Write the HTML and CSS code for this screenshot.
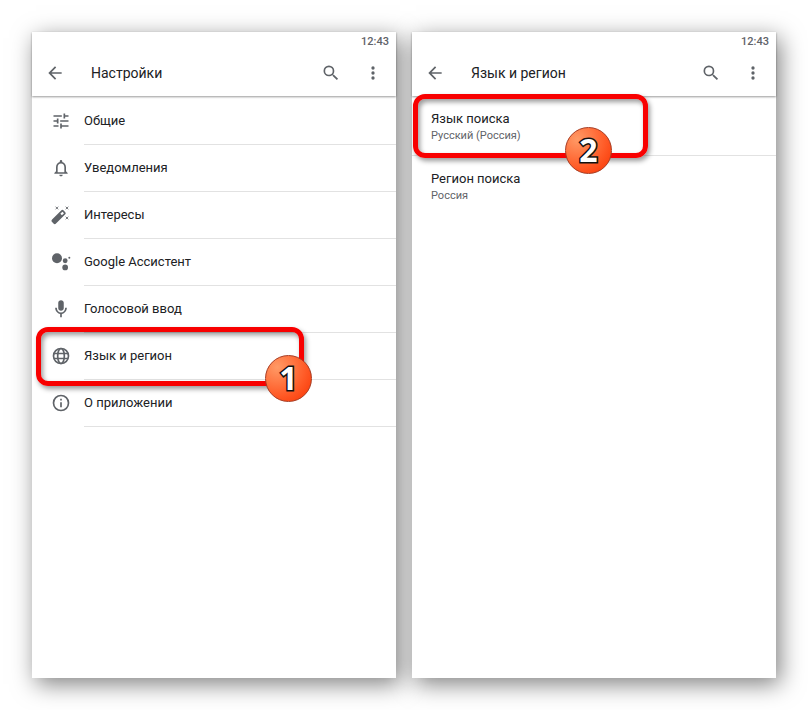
FILE: index.html
```
<!DOCTYPE html>
<html lang="ru">
<head>
    <meta charset="UTF-8">
    <meta name="viewport" content="width=device-width, initial-scale=1.0">
    <title>Настройки языка</title>
    <link rel="stylesheet" href="styles.css">
</head>
<body>

    <main class="screens">

        <!-- Экран 1: настройки -->
        <section class="phone">
            <header class="top">
                <div class="status">12:43</div>
                <div class="toolbar">
                    <button class="icon-btn" aria-label="Назад">
                        <svg viewBox="0 0 24 24"><path d="M20 11H7.83l5.59-5.59L12 4l-8 8 8 8 1.41-1.41L7.83 13H20v-2z"/></svg>
                    </button>
                    <h1>Настройки</h1>
                    <button class="icon-btn" aria-label="Поиск">
                        <svg viewBox="0 0 24 24"><path d="M15.5 14h-.79l-.28-.27A6.47 6.47 0 0 0 16 9.5 6.5 6.5 0 1 0 9.5 16c1.61 0 3.09-.59 4.23-1.57l.27.28v.79l5 4.99L20.49 19l-4.99-5zm-6 0a4.5 4.5 0 1 1 0-9 4.5 4.5 0 0 1 0 9z"/></svg>
                    </button>
                    <button class="icon-btn" aria-label="Ещё">
                        <svg viewBox="0 0 24 24"><circle cx="12" cy="6" r="2"/><circle cx="12" cy="12" r="2"/><circle cx="12" cy="18" r="2"/></svg>
                    </button>
                </div>
            </header>

            <nav class="menu">
                <a href="#" class="row">
                    <svg viewBox="0 0 24 24"><path d="M3 17v2h6v-2H3zM3 5v2h10V5H3zm10 16v-2h8v-2h-8v-2h-2v6h2zM7 9v2H3v2h4v2h2V9H7zm14 4v-2H11v2h10zm-6-4h2V7h4V5h-4V3h-2v6z"/></svg>
                    <span>Общие</span>
                </a>
                <a href="#" class="row">
                    <svg viewBox="0 0 24 24"><path d="M12 22c1.1 0 2-.9 2-2h-4c0 1.1.9 2 2 2zm6-6v-5c0-3.07-1.63-5.64-4.5-6.32V4a1.5 1.5 0 0 0-3 0v.68C7.64 5.36 6 7.92 6 11v5l-2 2v1h16v-1l-2-2zm-2 1H8v-6c0-2.48 1.51-4.5 4-4.5s4 2.02 4 4.5v6z"/></svg>
                    <span>Уведомления</span>
                </a>
                <a href="#" class="row">
                    <svg viewBox="0 0 24 24">
                        <path fill-rule="evenodd" d="M1.3 17.500 12.200 6.600a2.100 2.100 0 0 1 3 0l1.700 1.700a2.100 2.100 0 0 1 0 3L6 22.200a2.100 2.100 0 0 1-3 0l-1.700-1.700a2.100 2.100 0 0 1 0-3zM11.200 10.500l1.900 1.900 2.500-2.500-1.900-1.900z"/>
                        <path class="line thin" d="M5.500 2l3.200 3.200M8.700 2 5.500 5.200M17.600 2l3.200 3.200M20.800 2l-3.200 3.200M17.600 14l3.200 3.200M20.800 14l-3.200 3.200"/>
                    </svg>
                    <span>Интересы</span>
                </a>
                <a href="#" class="row">
                    <svg viewBox="0 0 24 24"><circle cx="7.200" cy="7.500" r="6"/><circle cx="17" cy="10.500" r="2.900"/><circle cx="17" cy="18.500" r="3.400"/><circle cx="22" cy="7" r="1.200"/></svg>
                    <span>Google Ассистент</span>
                </a>
                <a href="#" class="row">
                    <svg viewBox="0 0 24 24"><path d="M12 14c1.900 0 3.300-1.340 3.300-3V4.500c0-1.660-1.400-3-3.300-3s-3.300 1.340-3.300 3V11c0 1.660 1.400 3 3.300 3zm6.500-3.500H17c0 3.500-2.300 5.700-5 5.700s-5-2.200-5-5.700H5c0 3.900 2.600 6.800 6 7.400V22h2v-4.100c3.400-.6 6-3.500 6-7.400z"/></svg>
                    <span>Голосовой ввод</span>
                </a>
                <a href="#" class="row marked">
                    <svg viewBox="0 0 24 24"><g class="line"><circle cx="12" cy="12" r="9"/><ellipse cx="12" cy="12" rx="4" ry="9"/><path d="M3.500 9h17M3.500 15h17"/></g></svg>
                    <span>Язык и регион</span>
                    <span class="frame"><b class="badge">1</b></span>
                </a>
                <a href="#" class="row">
                    <svg viewBox="0 0 24 24"><circle class="line" cx="12" cy="12" r="9"/><path d="M11 11h2v6h-2zM11 7h2v2h-2z"/></svg>
                    <span>О приложении</span>
                </a>
            </nav>
        </section>

        <!-- Экран 2: язык и регион -->
        <section class="phone">
            <header class="top">
                <div class="status">12:43</div>
                <div class="toolbar">
                    <button class="icon-btn" aria-label="Назад">
                        <svg viewBox="0 0 24 24"><path d="M20 11H7.83l5.59-5.59L12 4l-8 8 8 8 1.41-1.41L7.83 13H20v-2z"/></svg>
                    </button>
                    <h1>Язык и регион</h1>
                    <button class="icon-btn" aria-label="Поиск">
                        <svg viewBox="0 0 24 24"><path d="M15.5 14h-.79l-.28-.27A6.47 6.47 0 0 0 16 9.5 6.5 6.5 0 1 0 9.5 16c1.61 0 3.09-.59 4.23-1.57l.27.28v.79l5 4.99L20.49 19l-4.99-5zm-6 0a4.5 4.5 0 1 1 0-9 4.5 4.5 0 0 1 0 9z"/></svg>
                    </button>
                    <button class="icon-btn" aria-label="Ещё">
                        <svg viewBox="0 0 24 24"><circle cx="12" cy="6" r="2"/><circle cx="12" cy="12" r="2"/><circle cx="12" cy="18" r="2"/></svg>
                    </button>
                </div>
            </header>

            <nav class="options">
                <a href="#" class="option marked">
                    <span>Язык поиска</span>
                    <small>Русский (Россия)</small>
                    <span class="frame"><b class="badge">2</b></span>
                </a>
                <a href="#" class="option">
                    <span>Регион поиска</span>
                    <small>Россия</small>
                </a>
            </nav>
        </section>

    </main>

</body>
</html>
```
FILE: styles.css
```
* {
    box-sizing: border-box;
}

body {
    margin: 0;
    background-color: #ffffff;
    color: #202124;
    font-family: Roboto, "Noto Sans", sans-serif;
    font-size: 13px;
}

.screens {
    display: flex;
    gap: 16px;
    min-height: 100vh;
    padding: 32px;
    isolation: isolate;
}

.phone {
    position: relative;
    flex: 1;
    background-color: #ffffff;
}

/* Тень лежит под обоими экранами */
.phone::before {
    content: "";
    position: absolute;
    inset: 0;
    z-index: -1;
    box-shadow: 4px 6px 22px rgba(0, 0, 0, 0.5);
}

/* --- ШАПКА --- */
.top {
    height: 64px;
    padding: 0 7px;
    box-shadow: 0 1px 2px rgba(0, 0, 0, 0.4);
}

.status {
    height: 20px;
    line-height: 20px;
    font-size: 11px;
    font-weight: 500;
    text-align: right;
    color: #5f6368;
}

.toolbar {
    display: flex;
    align-items: center;
    height: 42px;
}

h1 {
    flex: 1;
    margin: 0;
    padding-left: 20px;
    font-size: 14px;
    font-weight: normal;
}

.icon-btn {
    width: 32px;
    height: 32px;
    padding: 6px;
    border: none;
    background: none;
    cursor: pointer;
}

.icon-btn + .icon-btn {
    margin-left: 10px;
}

svg {
    display: block;
    width: 20px;
    height: 20px;
    fill: #5f6368;
}

.line {
    fill: none;
    stroke: #5f6368;
    stroke-width: 2;
}

.thin {
    stroke-width: 1;
}

/* --- СПИСКИ --- */
a {
    color: inherit;
    text-decoration: none;
}

.menu {
    padding-top: 2px;
}

.row {
    display: flex;
    align-items: center;
    height: 47px;
    padding-left: 19px;
}

.row svg {
    margin-bottom: 2px;
}

.row > span:not(.frame) {
    flex: 1;
    margin-left: 13px;
    line-height: 46px;
    border-bottom: 1px solid #e2e2e2;
}

.option {
    display: flex;
    flex-direction: column;
    padding: 15px 19px 10px;
    line-height: 16px;
    border-bottom: 1px solid #e2e2e2;
}

.option:last-child {
    border-bottom: none;
}

.option small {
    font-size: 11px;
    line-height: 18px;
    color: #5f6368;
}

/* --- ВЫДЕЛЕНИЕ --- */
.marked {
    position: relative;
}

.frame {
    position: absolute;
    top: -6px;
    bottom: -6px;
    left: 4px;
    width: 268px;
    border: 5px solid #f80000;
    border-radius: 12px;
    box-shadow: 2px 3px 5px rgba(0, 0, 0, 0.4), inset 2px 3px 5px rgba(0, 0, 0, 0.4);
}

.option .frame {
    top: -2px;
    bottom: -3px;
    left: 1px;
    width: 235px;
}

.badge {
    position: absolute;
    right: -13px;
    bottom: -21px;
    width: 47px;
    height: 47px;
    border: 1px solid #a83a20;
    border-radius: 50%;
    background: radial-gradient(circle at 25% 25%, #ff9a66, #ff5a26 60%, #f83200);
    color: #ffffff;
    font-family: "Noto Sans", sans-serif;
    font-size: 32px;
    line-height: 44px;
    text-align: center;
    -webkit-text-stroke: 3px #111111;
    paint-order: stroke fill;
}

.option .badge {
    right: 31px;
}
```
